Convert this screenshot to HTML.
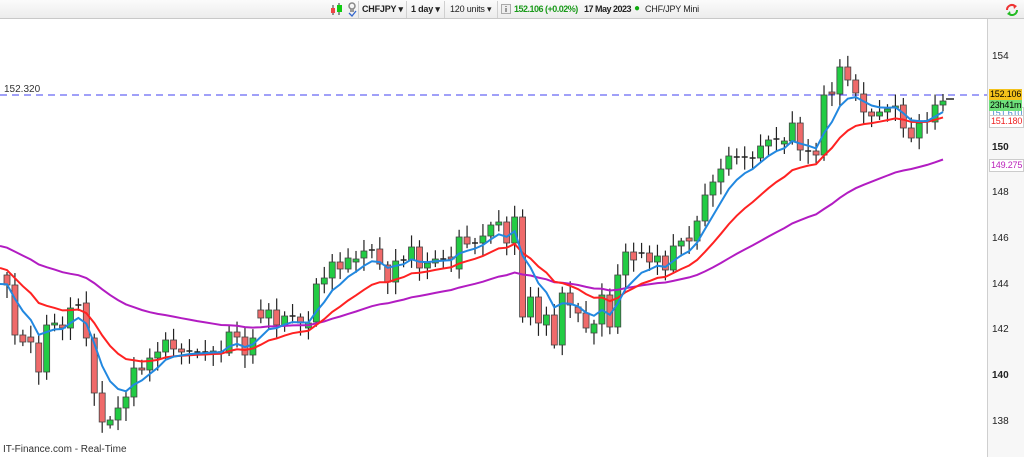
<!DOCTYPE html>
<html><head><meta charset="utf-8"><style>
body{margin:0;width:1024px;height:457px;overflow:hidden;background:#fff;font-family:"Liberation Sans",sans-serif;position:relative}
#tb{position:absolute;left:0;top:0;width:1024px;height:18px;background:linear-gradient(#fbfbfb,#ececec);border-bottom:1px solid #c8c8c8;font-size:9px;color:#222;letter-spacing:-0.2px}
#tb span{position:absolute;top:4px;white-space:nowrap}
.sep{position:absolute;top:1px;width:1px;height:17px;background:#d0d0d0}
#ax{position:absolute;left:987px;top:19px;width:37px;height:438px;background:#f7f7f7;border-left:1px solid #cfcfcf}
.lb{position:absolute;font-size:10px;left:992px;color:#222}
.tag{position:absolute;left:989px;font-size:9px;padding:0 1px;line-height:11px;height:11px;letter-spacing:-0.2px}
</style></head><body>
<div id="tb">
<svg style="position:absolute;left:330px;top:3px" width="14" height="13"><line x1="3" y1="2" x2="3" y2="12" stroke="#333"/><rect x="1" y="5" width="4" height="5" fill="#e44"/><line x1="9" y1="0" x2="9" y2="12" stroke="#333"/><rect x="7" y="2" width="5" height="7" fill="#1c1"/></svg>
<svg style="position:absolute;left:347px;top:2px" width="10" height="15"><circle cx="5" cy="4" r="3" fill="none" stroke="#888" stroke-width="1.5"/><rect x="3" y="7" width="4" height="3" fill="#999"/><path d="M2 11 L5 14 L9 9" fill="none" stroke="#36c" stroke-width="1.3"/></svg>
<div class="sep" style="left:358px"></div>
<span style="left:362px;font-weight:bold">CHFJPY ▾</span>
<div class="sep" style="left:406px"></div>
<span style="left:411px;font-weight:bold">1 day ▾</span>
<div class="sep" style="left:444px"></div>
<span style="left:450px">120 units ▾</span>
<div class="sep" style="left:497px"></div>
<svg style="position:absolute;left:501px;top:4px" width="10" height="10"><rect x="0.5" y="0.5" width="9" height="9" fill="#eee" stroke="#aaa"/><rect x="4" y="4" width="2" height="4" fill="#999"/><rect x="4" y="2" width="2" height="1" fill="#999"/></svg>
<span style="left:514px;color:#1a9a1a;font-weight:bold;letter-spacing:-0.5px">152.106 (+0.02%)</span>
<span style="left:584px;font-weight:bold;letter-spacing:-0.5px">17 May 2023</span>
<span style="left:634px;top:3px;color:#1a1;font-size:10px">●</span>
<span style="left:645px">CHF/JPY Mini</span>
<svg style="position:absolute;left:1005px;top:3px" width="14" height="13"><path d="M2 7 A5 5 0 0 1 10 3" fill="none" stroke="#e33" stroke-width="2"/><path d="M8 1 L12 3 L9 6Z" fill="#e33"/><path d="M12 7 A5 5 0 0 1 4 11" fill="none" stroke="#2b2" stroke-width="2"/><path d="M6 13 L2 11 L5 8Z" fill="#2b2"/></svg>
</div>
<div id="ax"></div>
<svg id="ch" style="position:absolute;left:0;top:0" width="987" height="457"></svg>
<div class="lb" style="top:51px">154</div>
<div class="lb" style="top:142px;font-weight:bold">150</div>
<div class="lb" style="top:187px">148</div>
<div class="lb" style="top:233px">146</div>
<div class="lb" style="top:279px">144</div>
<div class="lb" style="top:324px">142</div>
<div class="lb" style="top:370px;font-weight:bold">140</div>
<div class="lb" style="top:416px">138</div>
<div class="tag" style="top:107px;color:#48c;background:#fff;border:1px solid #ccc">151.610</div>
<div class="tag" style="top:89px;background:#f3c21b;color:#000">152.106</div>
<div class="tag" style="top:100px;background:#6ee07a;color:#000">23h41m</div>
<div class="tag" style="top:115px;color:#e22;background:#fff;border:1px solid #ccc">151.180</div>
<div class="tag" style="top:159px;color:#b2b;background:#fff;border:1px solid #ccc">149.275</div>
<div style="position:absolute;left:4px;top:84px;font-size:10px;color:#333">152.320</div>
<div style="position:absolute;left:3px;top:444px;font-size:10px;color:#333">IT-Finance.com - Real-Time</div>
<script>
var d=[[275,285],[285,335],[335,342],[337,342],[343,372],[372,325],[325,323],[325,328],[328,308],[305,305],[303,338],[338,393],[393,422],[425,420],[420,408],[408,397],[397,368],[368,370],[370,358],
[358,352],[352,340],[340,349],[349,352],[352,351],
[353,352],[352,352],[353,351],[352,352],[353,332],[332,337],[337,355],[355,338],
[310,318],[318,310],[310,325],[325,316],[316,316],[317,323],[328,323],[322,284],[284,278],[278,262],[262,269],[269,258],[262,259],[258,251],[250,250],[249,264],[265,282],[282,261],[261,260],[260,247],[247,268],[268,263],[263,259],[259,259],[257,259],[269,237],[237,244],[243,243],[243,236],[236,225],[225,222],[222,243],[243,217],[217,317],
[317,297],[297,323],[325,315],[315,345],[345,293],[293,305],[307,313],[313,328],[333,324],[324,295],[295,327],[327,275],[275,252],[252,260],[253,253],[253,262],[262,256],[256,270],[270,246],[246,241],[238,241],[241,221],[221,195],[195,182],[182,169],[169,156],[157,157],[157,157],[158,158],[158,146],[146,140],[139,139],[144,141],[141,123],[123,150],[150,151],[151,155],[155,95],[92,94],[94,67],[67,80],[80,93],[94,112],[112,116],[116,112],[112,109],[108,106],[105,128],[128,138],[138,123],[121,121],[122,105],[105,101]];
var s='<line x1="0" y1="95" x2="987" y2="95" stroke="#4040f0" stroke-dasharray="7,5" stroke-width="1"/>';
var n=d.length,step=(943-7)/(n-1),b=284,r=268,p=246,B=[],R=[],P=[];
for(var i=0;i<n;i++){var x=7+i*step,o=d[i][0],c=d[i][1],t=Math.min(o,c),bo=Math.max(o,c);
var w1=3+Math.abs(Math.sin(i*1.7))*9,w2=3+Math.abs(Math.cos(i*2.3))*10;
s+='<line x1="'+x+'" y1="'+(t-w1)+'" x2="'+x+'" y2="'+(bo+w2)+'" stroke="#222" stroke-width="1.2"/>';
if(Math.abs(o-c)<1.5)s+='<line x1="'+(x-3)+'" y1="'+c+'" x2="'+(x+3)+'" y2="'+c+'" stroke="#222" stroke-width="1.5"/>';
else s+='<rect x="'+(x-3)+'" y="'+t+'" width="6" height="'+(bo-t)+'" fill="'+(c>o?'#ef6a6a':'#22cc44')+'" stroke="#444" stroke-width="0.8"/>';
b+= (c-b)*2/7; r+=(c-r)*2/16; p+=(c-p)*2/45;
B.push(x+','+b.toFixed(1));R.push(x+','+r.toFixed(1));P.push(x+','+p.toFixed(1));}
s+='<polyline points="0,246 '+P.join(' ')+'" fill="none" stroke="#b21cc2" stroke-width="2"/>';
s+='<polyline points="0,268 '+R.join(' ')+'" fill="none" stroke="#f22" stroke-width="2"/>';
s+='<polyline points="0,284 '+B.join(' ')+'" fill="none" stroke="#2288e0" stroke-width="2"/>';
s+='<line x1="946" y1="99" x2="954" y2="99" stroke="#222" stroke-width="1.5"/>';
document.getElementById('ch').innerHTML=s;
</script>
</body></html>
